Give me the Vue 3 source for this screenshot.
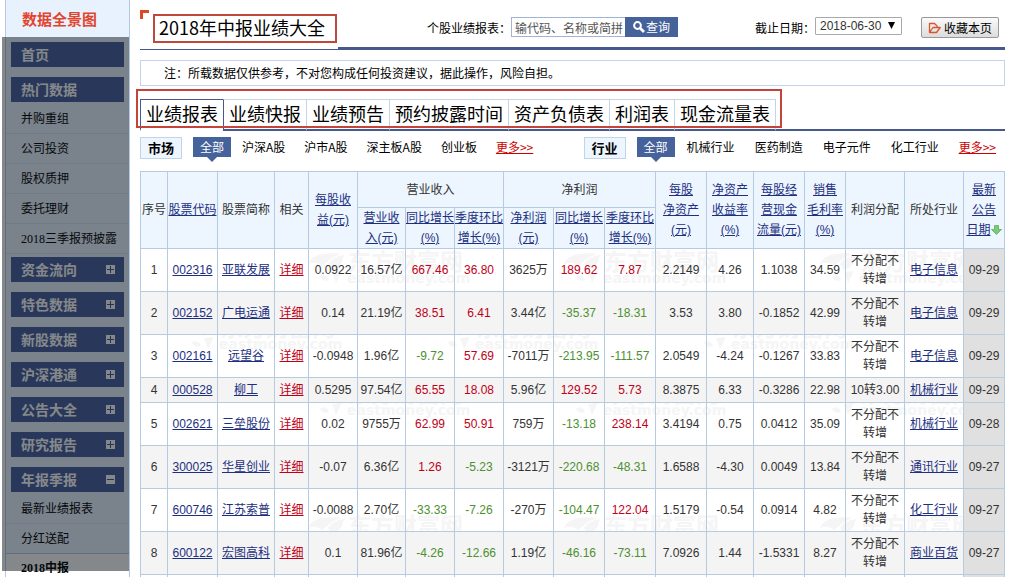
<script setup>
import { ref } from 'vue'

const menu = [
  { title: '首页' },
  { title: '热门数据', items: ['并购重组', '公司投资', '股权质押', '委托理财', '2018三季报预披露'] },
  { title: '资金流向', icon: 'plus' },
  { title: '特色数据', icon: 'plus' },
  { title: '新股数据', icon: 'plus' },
  { title: '沪深港通', icon: 'plus' },
  { title: '公告大全', icon: 'plus' },
  { title: '研究报告', icon: 'plus' },
  { title: '年报季报', icon: 'minus', items: ['最新业绩报表', '分红送配', '2018中报'] }
]
const current = '2018中报'

const tabs = ['业绩报表', '业绩快报', '业绩预告', '预约披露时间', '资产负债表', '利润表', '现金流量表']
const filters = [
  { name: '市场', cls: 'market', links: ['沪深A股', '沪市A股', '深主板A股', '创业板'] },
  { name: '行业', cls: 'industry', links: ['机械行业', '医药制造', '电子元件', '化工行业'] }
]

const keyword = ref('')
const date = ref('2018-06-30')

const widths = [27, 50, 57, 34, 49, 48, 49, 49, 50, 51, 51, 51, 47, 51, 41, 59, 59, 41]

const headLeft = [
  { lines: ['序号'] },
  { lines: ['股票代码'], link: true },
  { lines: ['股票简称'] },
  { lines: ['相关'] },
  { lines: ['每股收', '益(元)'], link: true }
]
const headRight = [
  { lines: ['每股', '净资产', '(元)'], link: true },
  { lines: ['净资产', '收益率', '(%)'], link: true },
  { lines: ['每股经', '营现金', '流量(元)'], link: true },
  { lines: ['销售', '毛利率', '(%)'], link: true },
  { lines: ['利润分配'] },
  { lines: ['所处行业'] },
  { lines: ['最新', '公告', '日期'], link: true, sorted: true }
]
const headSub = [
  ['营业收', '入(元)'],
  ['同比增长', '(%)'],
  ['季度环比', '增长(%)'],
  ['净利润', '(元)'],
  ['同比增长', '(%)'],
  ['季度环比', '增长(%)']
]

const none = ['不分配不', '转增']
const rows = [
  ['002316', '亚联发展', '0.0922', '16.57亿', '667.46', '36.80', '3625万', '189.62', '7.87', '2.2149', '4.26', '1.1038', '34.59', none, '电子信息', '09-29'],
  ['002152', '广电运通', '0.14', '21.19亿', '38.51', '6.41', '3.44亿', '-35.37', '-18.31', '3.53', '3.80', '-0.1852', '42.99', none, '电子信息', '09-29'],
  ['002161', '远望谷', '-0.0948', '1.96亿', '-9.72', '57.69', '-7011万', '-213.95', '-111.57', '2.0549', '-4.24', '-0.1267', '33.83', none, '电子信息', '09-29'],
  ['000528', '柳工', '0.5295', '97.54亿', '65.55', '18.08', '5.96亿', '129.52', '5.73', '8.3875', '6.33', '-0.3286', '22.98', ['10转3.00'], '机械行业', '09-29'],
  ['002621', '三垒股份', '0.02', '9755万', '62.99', '50.91', '759万', '-13.18', '238.14', '3.4194', '0.75', '0.0412', '35.09', none, '机械行业', '09-28'],
  ['300025', '华星创业', '-0.07', '6.36亿', '1.26', '-5.23', '-3121万', '-220.68', '-48.31', '1.6588', '-4.30', '0.0049', '13.84', none, '通讯行业', '09-27'],
  ['600746', '江苏索普', '-0.0088', '2.70亿', '-33.33', '-7.26', '-270万', '-104.47', '122.04', '1.5179', '-0.54', '0.0914', '4.82', none, '化工行业', '09-27'],
  ['600122', '宏图高科', '0.1', '81.96亿', '-4.26', '-12.66', '1.19亿', '-46.16', '-73.11', '7.0926', '1.44', '-1.5331', '8.27', none, '商业百货', '09-27']
]
const changeColumns = [4, 5, 7, 8]

function tone(row, i) {
  if (!changeColumns.includes(i)) return ''
  return row[i].startsWith('-') ? 'down' : 'up'
}

const marks = []
for (const r of [0, 1, 2, 4]) {
  for (let c = 0; c < 3; c++) {
    marks.push({ x: (r % 2 ? 40 : 168) + c * 256, y: 79 + r * 66 })
  }
}
</script>

<template>
  <div class="page">
    <aside class="side">
      <h2 class="side-title">数据全景图</h2>
      <nav class="menu">
        <section v-for="m in menu" :key="m.title" class="group">
          <a href="#" class="bar">
            <span>{{ m.title }}</span>
            <svg v-if="m.icon" width="9" height="9" viewBox="0 0 9 9" aria-hidden="true">
              <rect width="9" height="9" fill="#fff" />
              <rect x="1" y="4" width="7" height="1" fill="#3c5490" />
              <rect v-if="m.icon === 'plus'" x="4" y="1" width="1" height="7" fill="#3c5490" />
            </svg>
          </a>
          <ul v-if="m.items" class="sub">
            <li v-for="i in m.items" :key="i" :class="{ current: i === current }"><a href="#">{{ i }}</a></li>
          </ul>
        </section>
      </nav>
      <div class="shade"></div>
    </aside>

    <main class="main">
      <header class="head">
        <div class="head-title">
          <i class="corner"></i>
          <h1>2018年中报业绩大全</h1>
        </div>
        <div class="tools">
          <form class="search" @submit.prevent>
            <label for="kw">个股业绩报表：</label>
            <input id="kw" v-model="keyword" type="text" placeholder="输代码、名称或简拼">
            <button type="submit">
              <svg width="12" height="12" viewBox="0 0 12 12" aria-hidden="true">
                <circle cx="4.5" cy="4.5" r="3.4" fill="none" stroke="#fff" stroke-width="2" />
                <path d="M7 7l4 4" stroke="#fff" stroke-width="2.6" />
              </svg>
              <span>查询</span>
            </button>
          </form>
          <div class="period">
            <label for="date">截止日期：</label>
            <span class="select">
              <select id="date" v-model="date"><option>2018-06-30</option></select>
              <svg width="7" height="7" viewBox="0 0 7 7" aria-hidden="true"><path d="M0 0h7L3.500 7z" fill="#000" /></svg>
            </span>
          </div>
          <button type="button" class="fav">
            <svg width="13" height="12" viewBox="0 0 13 12" aria-hidden="true">
              <path d="M1.500 10.500V1.500h5l2.500 2.500v1.500M1.500 10.500L5 5.500h7.200L8.500 10.500z" fill="none" stroke="#d9532c" stroke-width="1.300" stroke-linejoin="round" />
            </svg>
            <span>收藏本页</span>
          </button>
        </div>
      </header>

      <p class="note">注：所载数据仅供参考，不对您构成任何投资建议，据此操作，风险自担。</p>

      <nav class="tabs">
        <a v-for="(t, i) in tabs" :key="t" href="#" class="tab" :class="{ active: i === 0 }">{{ t }}</a>
        <span class="frame"></span>
      </nav>

      <div class="filters">
        <div v-for="f in filters" :key="f.name" class="filter" :class="f.cls">
          <strong>{{ f.name }}</strong>
          <a href="#" class="all">全部</a>
          <a v-for="l in f.links" :key="l" href="#">{{ l }}</a>
          <a href="#" class="more">更多&gt;&gt;</a>
        </div>
      </div>

      <div class="grid">
        <svg class="watermark" aria-hidden="true">
          <g v-for="(m, i) in marks" :key="i" :transform="`translate(${m.x} ${m.y})`">
            <path d="M0 14C4 4 18 2 34 4C24 6 20 12 14 16C10 12 5 12 0 14zM20 14C24 8 30 6 36 5C34 12 32 18 24 20zM12 26c4-2 8 0 9 4c-5 2-8 0-9-4zM24 22l10-1l-6 12z" />
            <text x="40" y="20" class="wm-name">东方财富网</text>
            <text x="39" y="33" class="wm-site">eastmoney.com</text>
          </g>
        </svg>
        <table>
          <colgroup>
            <col v-for="(w, i) in widths" :key="i" :style="{ width: w / 8.64 + '%' }">
          </colgroup>
          <thead>
            <tr class="top">
              <th v-for="h in headLeft" :key="h.lines[0]" rowspan="2">
                <component :is="h.link ? 'a' : 'span'" :href="h.link ? '#' : null"><template v-for="(l, i) in h.lines" :key="i"><br v-if="i">{{ l }}</template></component>
              </th>
              <th colspan="3">营业收入</th>
              <th colspan="3">净利润</th>
              <th v-for="h in headRight" :key="h.lines.join()" rowspan="2">
                <component :is="h.link ? 'a' : 'span'" :href="h.link ? '#' : null"><template v-for="(l, i) in h.lines" :key="i"><br v-if="i">{{ l }}</template></component><svg v-if="h.sorted" width="11" height="10" viewBox="0 0 11 10" aria-hidden="true">
                  <path d="M3.500 .5h4v4h3L5.500 9.500L.5 4.500h3z" fill="#7fc97a" stroke="#5fae5c" stroke-width=".8" />
                </svg>
              </th>
            </tr>
            <tr>
              <th v-for="(s, n) in headSub" :key="n"><a href="#">{{ s[0] }}<br>{{ s[1] }}</a></th>
            </tr>
          </thead>
          <tbody>
            <tr v-for="(row, n) in rows" :key="row[0]">
              <td>{{ n + 1 }}</td>
              <td><a href="#">{{ row[0] }}</a></td>
              <td><a href="#">{{ row[1] }}</a></td>
              <td><a href="#" class="detail">详细</a></td>
              <td v-for="i in 11" :key="i" :class="tone(row, i + 1)">{{ row[i + 1] }}</td>
              <td><template v-for="(l, i) in row[13]" :key="i"><br v-if="i">{{ l }}</template></td>
              <td><a href="#">{{ row[14] }}</a></td>
              <td class="date">{{ row[15] }}</td>
            </tr>
            <tr class="rest"><td v-for="i in 18" :key="i" :class="{ date: i === 18 }"></td></tr>
          </tbody>
        </table>
      </div>
    </main>
  </div>
</template>

<style>
body {
  margin: 0;
  background: #fff;
}
</style>

<style scoped>
.page {
  display: flex;
  height: 100vh;
  overflow: hidden;
  padding: 0 9px 0 5px;
  box-sizing: border-box;
  font: 12px/18px "Noto Sans CJK SC", sans-serif;
  color: #000;
}
a {
  color: inherit;
  text-decoration: none;
}
h1, h2, p, ul {
  margin: 0;
  padding: 0;
}
input, select, button {
  font: inherit;
  box-sizing: border-box;
  margin: 0;
}

.side {
  position: relative;
  flex: none;
  width: 123px;
  border: solid #b4c8e4;
  border-width: 0 1px;
  background: #e8f2fe;
}
.side-title {
  height: 42px;
  padding-left: 16px;
  font-size: 15px;
  line-height: 38px;
  color: #e2452e;
}
.bar {
  display: flex;
  align-items: center;
  justify-content: space-between;
  height: 25px;
  margin: 0 5px 10px;
  padding: 0 9px 0 10px;
  background: #445c9c;
  color: #fff;
  font-size: 14px;
  font-weight: bold;
}
.bar span {
  line-height: 16px;
  padding-bottom: 2px;
}
.sub {
  margin-top: -8px;
  padding-bottom: 3px;
  list-style: none;
}
.sub li {
  height: 29px;
  padding-left: 15px;
  border-bottom: 1px solid #d8e2f0;
  font-family: "Liberation Serif", "Noto Sans CJK SC", sans-serif;
  line-height: 31px;
}
.sub .current {
  margin-top: -1px;
  border-top: 1px solid #b4c8e4;
  background: #fff;
  font-weight: bold;
  line-height: 29px;
}
.shade {
  position: absolute;
  top: 37px;
  bottom: 6px;
  left: -4px;
  right: 0;
  background: rgba(12, 18, 24, .5);
  pointer-events: none;
}

.main {
  flex: 1;
  min-width: 0;
  padding-left: 10px;
}
.head {
  display: flex;
  height: 50px;
}
.head-title {
  position: relative;
  flex: none;
  padding: 14px 1px 0 13px;
  border-bottom: 1px solid #44588c;
}
.corner {
  position: absolute;
  top: 10px;
  left: 0;
  width: 6px;
  height: 6px;
  border: solid #dc4a22;
  border-width: 3px 0 0 3px;
}
h1 {
  padding: 0 10px 2px 4px;
  border: 2px solid #bf483c;
  font-size: 18px;
  font-weight: normal;
  line-height: 23px;
}
.tools {
  flex: 1;
  display: flex;
  align-items: flex-start;
  padding: 17px 6px 0 89px;
  border-bottom: 3px solid #46598c;
}
.tools label {
  line-height: 22px;
}
.search, .period {
  display: flex;
  align-items: flex-start;
}
.search input {
  width: 114px;
  height: 20px;
  padding: 0 0 0 3px;
  border: 1px solid #a0b4d4;
  border-right: 0;
  border-radius: 0;
  line-height: 18px;
  outline: 0;
}
.search input::placeholder {
  color: #555;
  opacity: 1;
}
.search button {
  display: flex;
  align-items: center;
  gap: 1px;
  height: 20px;
  width: 53px;
  padding: 0 8px;
  border: 0;
  background: #46629a;
  color: #fff;
}
.search svg {
  flex: none;
}
.search button span {
  white-space: nowrap;
}
.period {
  margin: 0 19px 0 auto;
}
.select {
  position: relative;
  display: flex;
}
.select select {
  width: 87px;
  height: 18px;
  padding: 0 0 0 4px;
  border: 1px solid #a9a9a9;
  border-radius: 1px;
  appearance: none;
  background: #fff;
  font-family: "Liberation Sans", Arial, sans-serif;
  line-height: 16px;
  color: #333;
}
.select svg {
  position: absolute;
  right: 7px;
  top: 5px;
  pointer-events: none;
}
.fav {
  display: flex;
  align-items: center;
  justify-content: center;
  gap: 3px;
  width: 78px;
  height: 21px;
  padding: 0;
  border: 1px solid #999;
  border-radius: 2px;
  background: linear-gradient(#fafafa, #dcdcdc);
}
.note {
  margin-top: 10px;
  padding-left: 23px;
  border: 1px solid #c3d3e8;
  line-height: 24px;
}

.tabs {
  position: relative;
  display: flex;
  margin-top: 13px;
}
.tabs::after {
  content: "";
  flex: 1;
  border-left: 1px solid #c3d3e8;
  border-bottom: 2px solid #46598c;
}
.tab {
  padding: 0 5px 2px;
  border-left: 1px solid #c3d3e8;
  border-top: 1px solid #c3d3e8;
  border-bottom: 2px solid #46598c;
  font-size: 18px;
  line-height: 27px;
}
.tab.active {
  border-color: #46598c;
  border-bottom-color: #fff;
}
.active + .tab {
  border-left-color: #46598c;
}
.frame {
  position: absolute;
  top: -10px;
  left: -4px;
  width: 642px;
  height: 35px;
  border: 2px solid #c5443a;
  pointer-events: none;
}

.filters {
  display: flex;
  justify-content: space-between;
  padding: 6px 9px 12px 0;
}
.filter {
  display: flex;
  gap: 20px;
  line-height: 20px;
}
.filter strong {
  box-sizing: border-box;
  width: 42px;
  height: 22px;
  margin-right: -9px;
  border: 1px solid #c3d3e8;
  background: #edf5ff;
  font-size: 13px;
  text-align: center;
}
.filter .all {
  position: relative;
  height: 20px;
  margin-right: -8px;
  padding: 0 7px;
  background: #46629a;
  color: #fff;
}
.market {
  gap: 19px;
}
.market strong {
  margin-right: -8px;
}
.all::after {
  content: "";
  position: absolute;
  top: 20px;
  left: 14px;
  border: solid transparent;
  border-width: 5px 5px 0;
  border-top-color: #46629a;
}
.filter .more {
  color: #c00;
  text-decoration: underline;
}

.grid {
  position: relative;
}
.watermark {
  position: absolute;
  inset: 0;
  width: 100%;
  height: 100%;
  fill: #f5f5f5;
}
.wm-name {
  font: bold 23px "Noto Sans CJK SC", sans-serif;
}
.wm-site {
  font: bold 14px "DejaVu Sans", sans-serif;
}
table {
  position: relative;
  width: 100%;
  table-layout: fixed;
  border-collapse: collapse;
  font-family: "Liberation Sans", "Noto Sans CJK SC", sans-serif;
  color: #333;
}
th, td {
  border: 1px solid #b6cbdf;
  text-align: center;
  white-space: nowrap;
}
th {
  padding: 0;
  background: #edf6ff;
  font-weight: normal;
  line-height: 20px;
}
th svg {
  vertical-align: -1px;
}
.top {
  height: 36px;
}
td {
  padding: 3px 0;
  line-height: 18px;
}
th a, td a {
  color: #1c2f80;
  text-decoration: underline;
}
td .detail, .up {
  color: #c00018;
}
.down {
  color: #4c9030;
}
tbody tr:nth-child(even) {
  background: #f4f4f4;
}
td.date {
  background: #e0e0e0;
}
.rest td {
  height: 20px;
}
</style>
